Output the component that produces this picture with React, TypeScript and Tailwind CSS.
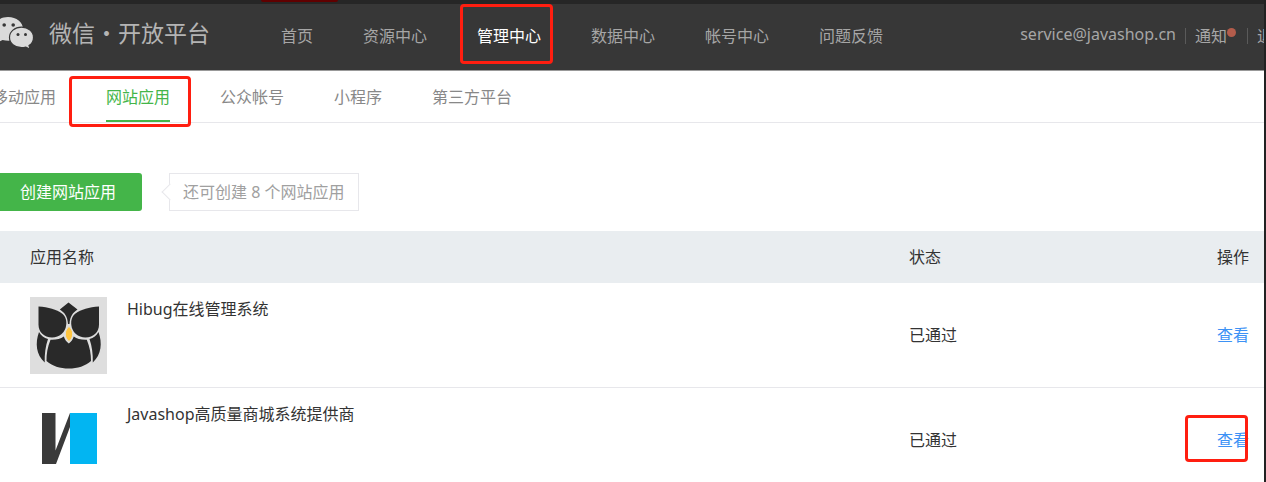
import type { ReactNode } from "react";

const mainNav = ["首页", "资源中心", "管理中心", "数据中心", "帐号中心", "问题反馈"];
const subNav = ["移动应用", "网站应用", "公众帐号", "小程序", "第三方平台"];

function Highlight({ className }: { className: string }) {
  return (
    <span
      aria-hidden="true"
      className={`pointer-events-none absolute z-10 rounded border-3 border-[#ff1e10] ${className}`}
    />
  );
}

function WechatLogo() {
  return (
    <svg className="-ml-2 h-9 w-[42px] shrink-0" viewBox="-8 1 42 36" aria-hidden="true">
      <path
        d="M8 2C-.5 2-6.500 7.500-6.500 14c0 4 2 7 5.500 9.500l-1.500 4 5-2.500c2 .6 4 .8 6 .8C16 25.800 23 21 23 14S16.500 2 8 2Z"
        fill="#dadada"
      />
      <path
        d="M21.500 12.200c-6.800 0-12 4.500-12 10.200s5.200 10.300 12 10.300c1.500 0 3-.2 4.400-.6l4.100 2.100-1-3.600c3-2 4.500-5 4.500-8.200 0-5.700-5.200-10.200-12-10.200Z"
        fill="#dadada"
        stroke="#373737"
        strokeWidth="1.200"
      />
      <circle cx="4.200" cy="10" r="1.800" fill="#373737" />
      <circle cx="13.200" cy="10" r="1.800" fill="#373737" />
      <circle cx="18" cy="19.500" r="1.500" fill="#373737" />
      <circle cx="25.500" cy="19.500" r="1.500" fill="#373737" />
    </svg>
  );
}

function OwlLogo() {
  return (
    <svg className="h-[77px] w-[77px]" viewBox="0 0 77 77" role="img" aria-label="Hibug">
      <rect width="77" height="77" fill="#dedede" />
      <g fill="#292929">
        <path d="M38.500 5.500 47.500 12.500C43 15.500 40 19 39.500 27h-1.500C37.500 19 34.500 15.500 29.800 12.500Z" />
        <path d="M8.500 9.500c10 .8 18 3 23.500 7 4 3.200 4.600 7.500 4.200 11.500-.8 7.500-6.700 12.500-14.200 12.500-8 0-13.500-5.500-13.500-13Z" />
        <path d="M69 9.500c-10 .8-18 3-23.500 7-4 3.200-4.600 7.500-4.200 11.500.8 7.500 6.700 12.500 14.200 12.500 8 0 13.500-5.500 13.500-13Z" />
        <path d="M9 35c2 3.500 5 6 9 7-2.500 7-3.500 15-3.300 23.500C6 57.500 5 46 9 35Z" />
        <path d="M68.500 35c-2 3.500-5 6-9 7 2.500 7 3.500 15 3.300 23.500C71.500 57.500 72.500 46 68.500 35Z" />
        <path d="M20.500 42.800c5.500.3 10-1 13.300-3.300 1 3 2.500 5 5 7 2.500-2 4-4 5-7 3.300 2.300 7.500 3.600 13 3.300 3 7.500 4.300 14 4.200 21.200-5.500 5-13.500 7.500-22.200 7.500S22 69 16.500 64c-.1-7.200 1-13.700 4-21.200Z" />
      </g>
      <path
        d="M39 29.500c2.500 2 3.700 4.500 3.700 7.500S41.500 42.500 39 44.500c-2.500-2-3.700-4.500-3.700-7.500s1.200-5.500 3.700-7.500Z"
        fill="#ffc540"
        stroke="#dedede"
      />
    </svg>
  );
}

function JavashopLogo() {
  return (
    <svg className="h-[77px] w-[77px]" viewBox="0 0 77 77" role="img" aria-label="Javashop">
      <path d="M12 11h13.500v37.500L40 11v14L26 62H12Z" fill="#3a3a3a" />
      <rect x="40" y="11" width="27" height="51" fill="#02b5f2" />
    </svg>
  );
}

const apps: { name: string; logo: ReactNode; status: string; marked: boolean }[] = [
  { name: "Hibug在线管理系统", logo: <OwlLogo />, status: "已通过", marked: false },
  { name: "Javashop高质量商城系统提供商", logo: <JavashopLogo />, status: "已通过", marked: true },
];

export default function App() {
  return (
    <div className="max-h-screen overflow-hidden border-r-2 border-[#222222] bg-white font-['Noto_Sans','Noto_Sans_CJK_SC',sans-serif] text-base leading-6 text-[#333333]">
      <div className="flex h-1 bg-[#262626]">
        <div className="ml-[261px] h-[2px] w-[77px] rounded-b-sm bg-[#600000]" />
      </div>

      <header className="flex h-[67px] items-center border-b border-[#999999] bg-[#373737] pb-[2px] text-[#a6a6a6]">
        <a href="#home" className="flex items-center pb-1 text-[23px] leading-8 text-[#b4b4b4]">
          <WechatLogo />
          <span className="ml-[15px] pb-[2px] whitespace-nowrap">微信・开放平台</span>
        </a>
        <nav className="ml-[71px] flex gap-[50px] whitespace-nowrap">
          {mainNav.map((label) => (
            <a key={label} href="#nav" className={label === "管理中心" ? "relative text-white" : "relative"}>
              {label}
              {label === "管理中心" && <Highlight className="-top-5 -left-[17px] h-[60px] w-[93px]" />}
            </a>
          ))}
        </nav>
        <div className="-mr-[25px] ml-auto flex items-center whitespace-nowrap">
          <span className="pb-1">service@javashop.cn</span>
          <span className="mx-[9px] h-4 w-px bg-[#5a5a5a]" />
          <a href="#notice" className="flex">
            通知
            <span className="mt-1 h-[9px] w-[9px] rounded-full bg-[#b35c4b]" />
          </a>
          <span className="mr-[9px] ml-[11px] h-4 w-px bg-[#5a5a5a]" />
          <a href="#logout">退出</a>
        </div>
      </header>

      <nav className="-ml-2 flex h-[52px] gap-[50px] border-b border-[#e7e7eb] whitespace-nowrap text-[#888888]">
        {subNav.map((label) =>
          label === "网站应用" ? (
            <a key={label} href="#tab" className="relative border-b-2 border-[#44b549] pt-[14px] text-[#44b549]">
              {label}
              <Highlight className="top-[5px] -left-[37px] h-[51px] w-[122px]" />
            </a>
          ) : (
            <a key={label} href="#tab" className="pt-[14px]">
              {label}
            </a>
          ),
        )}
      </nav>

      <main>
        <div className="flex pt-[50px] pb-5">
          <button type="button" className="-ml-[6px] h-[38px] rounded-[3px] bg-[#44b549] px-[26px] text-white">
            创建网站应用
          </button>
          <div className="relative ml-[27px] flex h-[38px] items-center border border-[#e7e7eb] px-[13px] text-[#a0a0a0]">
            <span className="absolute top-3 -left-[6px] h-3 w-3 rotate-45 border-b border-l border-[#e7e7eb] bg-white" />
            还可创建 8 个网站应用
          </div>
        </div>

        <table className="w-full table-fixed border-collapse text-left">
          <thead>
            <tr className="h-[52px] bg-[#e9edf0]">
              <th className="pl-[30px] font-normal">应用名称</th>
              <th className="w-[240px] font-normal">状态</th>
              <th className="w-[115px] pr-[15px] text-right font-normal">操作</th>
            </tr>
          </thead>
          <tbody>
            {apps.map((app) => (
              <tr key={app.name} className="border-b border-[#e7e7eb]">
                <td className="pt-[14px] pb-[13px] pl-[30px]">
                  <div className="flex gap-5">
                    {app.logo}
                    <span>{app.name}</span>
                  </div>
                </td>
                <td>{app.status}</td>
                <td className="pr-[15px] text-right">
                  <a href="#view" className="relative inline-block text-[#3d92f5]">
                    查看
                    {app.marked && <Highlight className="-top-[13px] -left-8 h-[47px] w-[63px]" />}
                  </a>
                </td>
              </tr>
            ))}
          </tbody>
        </table>
      </main>
    </div>
  );
}
